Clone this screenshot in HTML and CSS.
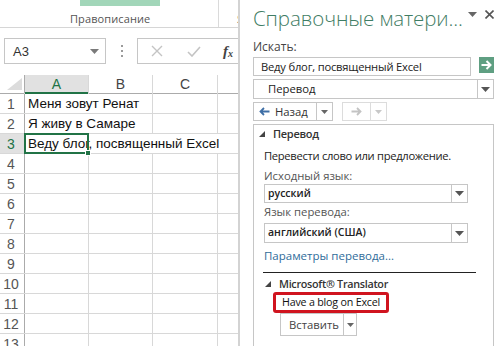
FILE: index.html
```html
<!DOCTYPE html>
<html lang="ru">
<head>
<meta charset="utf-8">
<link rel="stylesheet" href="styles.css">
</head>
<body>
<div class="app">
  <div class="excel">
    <div class="ribbon">
      <div class="group">
        <div class="green-block"></div>
        <div class="group-label">Правописание</div>
      </div>
      <div class="rsep"></div>
      <div class="next-label">Я</div>
    </div>
    <div class="fbar">
      <div class="namebox"><span>A3</span><svg class="nb-arrow" width="9" height="5" viewBox="0 0 9 5"><polygon points="0,0 9,0 4.5,5" fill="#7a7a7a"/></svg></div>
      <div class="vdots"><i></i><i></i><i></i></div>
      <div class="formula">
        <svg class="ficon" width="12" height="12" viewBox="0 0 12 12"><path d="M1 1 L11 11 M11 1 L1 11" stroke="#c4c4c4" stroke-width="1.4"/></svg>
        <svg class="ficon" width="14" height="11" viewBox="0 0 14 11"><path d="M1 6 L5 10 L13 1" stroke="#c4c4c4" stroke-width="1.6" fill="none"/></svg>
        <span class="fx">f<sub>x</sub></span>
      </div>
    </div>
    <div class="grid">
      <div class="corner"><svg width="15" height="12" viewBox="0 0 15 12"><polygon points="15,0 15,12 0,12" fill="#dcdcdc"/></svg></div>
      <div class="ch sel-col">A</div>
      <div class="ch">B</div>
      <div class="ch">C</div>
      <div class="ch"></div>

      <div class="rh">1</div>
      <div class="c span2">Меня зовут Ренат</div>
      <div class="c"></div>
      <div class="c"></div>

      <div class="rh">2</div>
      <div class="c span2">Я живу в Самаре</div>
      <div class="c"></div>
      <div class="c"></div>

      <div class="rh sel-row r3-head">3</div>
      <div class="c r3-text">Веду блог, посвященный Excel</div>
      <div class="selection"><span class="handle"></span></div>

      <div class="rh">4</div><div class="c"></div><div class="c"></div><div class="c"></div><div class="c"></div>
      <div class="rh">5</div><div class="c"></div><div class="c"></div><div class="c"></div><div class="c"></div>
      <div class="rh">6</div><div class="c"></div><div class="c"></div><div class="c"></div><div class="c"></div>
      <div class="rh">7</div><div class="c"></div><div class="c"></div><div class="c"></div><div class="c"></div>
      <div class="rh">8</div><div class="c"></div><div class="c"></div><div class="c"></div><div class="c"></div>
      <div class="rh">9</div><div class="c"></div><div class="c"></div><div class="c"></div><div class="c"></div>
      <div class="rh">10</div><div class="c"></div><div class="c"></div><div class="c"></div><div class="c"></div>
      <div class="rh">11</div><div class="c"></div><div class="c"></div><div class="c"></div><div class="c"></div>
      <div class="rh">12</div><div class="c"></div><div class="c"></div><div class="c"></div><div class="c"></div>
      <div class="rh">13</div><div class="c"></div><div class="c"></div><div class="c"></div><div class="c"></div>
    </div>
  </div>

  <div class="pane">
    <div class="title-row">
      <div class="title">Справочные матери...</div>
      <svg class="t-drop" width="9" height="5" viewBox="0 0 9 5"><polygon points="0,0 9,0 4.5,5" fill="#666"/></svg>
      <svg class="t-close" width="9" height="9" viewBox="0 0 9 9"><path d="M0.5 0.5 L8.5 8.5 M8.5 0.5 L0.5 8.5" stroke="#555" stroke-width="1.6"/></svg>
    </div>
    <div class="label">Искать:</div>
    <div class="search-row">
      <div class="search-input">Веду блог, посвященный Excel</div>
      <div class="go"><svg width="11" height="10" viewBox="0 0 11 10"><path d="M0.5 5 H9 M5.5 1 L9.5 5 L5.5 9" stroke="#fff" stroke-width="2" fill="none"/></svg></div>
    </div>
    <div class="select service">
      <span class="sel-text">Перевод</span>
      <span class="sel-btn"><svg width="9" height="5" viewBox="0 0 9 5"><polygon points="0,0 9,0 4.5,5" fill="#555"/></svg></span>
    </div>
    <div class="nav-row">
      <div class="navbtn">
        <span class="nav-main"><svg width="11" height="9" viewBox="0 0 11 9"><path d="M10.5 4.5 H2 M5 1 L1.5 4.5 L5 8" stroke="#3f6fa6" stroke-width="1.8" fill="none"/></svg>Назад</span>
        <span class="nav-drop"><svg width="7" height="4" viewBox="0 0 7 4"><polygon points="0,0 7,0 3.5,4" fill="#666"/></svg></span>
      </div>
      <div class="navbtn disabled">
        <span class="nav-main"><svg width="11" height="9" viewBox="0 0 11 9"><path d="M0.5 4.5 H9 M6 1 L9.5 4.5 L6 8" stroke="#c3c3c3" stroke-width="1.8" fill="none"/></svg></span>
        <span class="nav-drop"><svg width="7" height="4" viewBox="0 0 7 4"><polygon points="0,0 7,0 3.5,4" fill="#c8c8c8"/></svg></span>
      </div>
    </div>
    <div class="section">
      <div class="sec-head"><svg class="tri" width="6" height="6" viewBox="0 0 6 6"><polygon points="6,0 6,6 0,6" fill="#444"/></svg>Перевод</div>
      <div class="desc">Перевести слово или предложение.</div>
      <div class="flabel">Исходный язык:</div>
      <div class="select lang">
        <span class="sel-text">русский</span>
        <span class="sel-btn"><svg width="9" height="5" viewBox="0 0 9 5"><polygon points="0,0 9,0 4.5,5" fill="#555"/></svg></span>
      </div>
      <div class="flabel second">Язык перевода:</div>
      <div class="select lang lang2">
        <span class="sel-text">английский (США)</span>
        <span class="sel-btn"><svg width="9" height="5" viewBox="0 0 9 5"><polygon points="0,0 9,0 4.5,5" fill="#555"/></svg></span>
      </div>
      <div class="link">Параметры перевода...</div>
      <div class="rule"></div>
      <div class="sec-head sub"><svg class="tri" width="6" height="6" viewBox="0 0 6 6"><polygon points="6,0 6,6 0,6" fill="#444"/></svg>Microsoft® Translator</div>
      <div class="result">Have a blog on Excel</div>
      <div class="insert">
        <span class="ins-main">Вставить</span>
        <span class="ins-drop"><svg width="7" height="4" viewBox="0 0 7 4"><polygon points="0,0 7,0 3.5,4" fill="#666"/></svg></span>
      </div>
    </div>
  </div>
</div>
</body>
</html>
```

FILE: styles.css
```css
* { box-sizing: border-box; }
html, body { margin: 0; padding: 0; background: #fff; }
body { width: 501px; height: 346px; overflow: hidden; font-family: "Open Sans", "Noto Sans", sans-serif; color: #262626; }

.app { display: flex; width: 501px; height: 346px; }

/* ---------- Excel side ---------- */
.excel { width: 238px; flex: none; overflow: hidden; display: flex; flex-direction: column; background: #fff; }

.ribbon { height: 28px; flex: none; display: flex; border-bottom: 1px solid #d6d6d6; }
.group { width: 218px; flex: none; }
.green-block { width: 80px; height: 6px; margin-left: 80px; background: #a2d6b9; }
.group-label { margin-left: 70px; margin-top: 6px; font-size: 11px; line-height: 14px; color: #555; letter-spacing: 0.1px; white-space: nowrap; }
.rsep { width: 1px; height: 27px; background: #dadada; flex: none; }
.next-label { margin-left: 18px; margin-top: 12px; font-size: 11px; line-height: 14px; color: #555; white-space: nowrap; }

.fbar { display: flex; align-items: center; height: 26px; margin-top: 10px; flex: none; }
.namebox { width: 102px; height: 26px; margin-left: 4px; border: 1px solid #c6c6c6; display: flex; align-items: center; justify-content: space-between; padding: 0 6px 0 8px; font-family: "Liberation Sans", sans-serif; font-size: 13px; color: #333; flex: none; }
.vdots { width: 31px; display: flex; flex-direction: column; align-items: center; gap: 3px; flex: none; }
.vdots i { display: block; width: 2px; height: 2px; background: #9a9a9a; }
.formula { width: 110px; height: 26px; border: 1px solid #c6c6c6; border-right: none; display: flex; align-items: center; padding-left: 13px; flex: none; }
.formula .ficon:first-child { margin-right: 24px; }
.formula .ficon:nth-child(2) { margin-right: 22px; }
.fx { font-family: "Liberation Serif", serif; font-style: italic; font-size: 15px; color: #444; font-weight: bold; }
.fx sub { font-size: 10px; vertical-align: -1px; }

.grid { margin-top: 11px; display: grid; grid-template-columns: 24px 63px 63px 64px 30px; grid-template-rows: 18px repeat(13, 19px); gap: 1px; background: #d8d8d8; flex: none; }
.grid > div { background: #fff; }
.corner { display: flex; align-items: flex-end; justify-content: flex-end; padding: 0 2px 3px 0; box-shadow: 0 1px 0 #ababab, 1px 0 0 #ababab; }
.ch { display: flex; align-items: center; justify-content: center; font-family: "Liberation Sans", sans-serif; font-size: 14px; color: #444; box-shadow: 0 1px 0 #ababab; }
.ch.sel-col { background: #e1e1e1 !important; color: #217346; box-shadow: 0 1px 0 #217346, inset 0 -1px 0 #217346; }
.rh { display: flex; align-items: center; justify-content: center; font-family: "Liberation Sans", sans-serif; font-size: 14px; color: #555; box-shadow: 1px 0 0 #ababab; padding-right: 2px; }
.rh.sel-row { background: #e1e1e1 !important; color: #217346; box-shadow: 1px 0 0 #217346; }
.c { font-family: "Liberation Sans", sans-serif; font-size: 13.5px; color: #111; white-space: nowrap; padding-left: 3px; line-height: 19px; }
.span2 { grid-column: span 2; }
.r3-head { grid-row: 4; grid-column: 1; }
.r3-text { grid-row: 4; grid-column: 2 / span 4; }
.selection { grid-row: 4; grid-column: 2; margin: -1px; border: 2px solid #217346; background: transparent !important; position: relative; z-index: 2; }
.handle { position: absolute; right: -4px; bottom: -4px; width: 6px; height: 6px; background: #217346; border: 1px solid #fff; }

/* ---------- Pane ---------- */
.pane { flex: 1; border-left: 2px solid #d3d3d3; padding: 0 7px 0 13px; display: flex; flex-direction: column; overflow: hidden; }

.title-row { display: flex; align-items: center; height: 24px; margin-top: 6px; flex: none; }
.title { flex: 1; font-weight: 300; font-size: 20.5px; color: #3f7d64; white-space: nowrap; letter-spacing: -0.1px; }
.t-drop { margin-left: 4px; margin-top: -8px; }
.t-close { margin-left: 8px; margin-top: -8px; }

.label { font-size: 12px; color: #444; line-height: 16px; margin-top: 9px; flex: none; }
.search-row { display: flex; align-items: flex-start; margin-top: 2px; flex: none; }
.search-input { width: 218px; height: 19px; border: 1px solid #c6c6c6; font-size: 11.2px; letter-spacing: -0.2px; line-height: 17px; padding-left: 7px; color: #222; white-space: nowrap; overflow: hidden; }
.go { width: 15px; height: 16px; margin-left: 8px; background: #5f9f82; display: flex; align-items: center; justify-content: center; }

.select { display: flex; height: 20px; border: 1px solid #c6c6c6; flex: none; }
.select .sel-text { flex: 1; font-size: 11.3px; line-height: 18px; white-space: nowrap; color: #222; }
.select .sel-btn { width: 16px; border-left: 1px solid #c6c6c6; display: flex; align-items: center; justify-content: center; }
.service { margin-top: 3px; }
.service .sel-text { padding-left: 14px; }

.nav-row { display: flex; gap: 9px; margin-top: 3px; flex: none; }
.navbtn { display: flex; height: 19px; border: 1px solid #c6c6c6; }
.nav-main { display: flex; align-items: center; gap: 5px; padding: 0 5px 0 5px; font-size: 11.3px; color: #333; border-right: 1px solid #c6c6c6; }
.navbtn:first-child .nav-main { width: 63px; }
.nav-drop { width: 15px; display: flex; align-items: center; justify-content: center; }
.navbtn.disabled { border-color: #dcdcdc; }
.navbtn.disabled .nav-main { width: 28px; justify-content: center; border-right-color: #dcdcdc; }

.section { flex: 1; margin-top: 3px; border: 1px solid #c6c6c6; border-bottom: none; padding: 0 25px 0 10px; }
.sec-head { display: flex; align-items: center; height: 17px; font-weight: 600; font-size: 11px; letter-spacing: -0.3px; color: #333; margin-left: -5px; }
.sec-head .tri { margin-right: 8px; margin-top: 1px; }
.desc { font-size: 11.2px; letter-spacing: -0.3px; line-height: 16px; color: #222; margin-top: 6px; white-space: nowrap; }
.flabel { font-size: 11.3px; line-height: 16px; color: #555; margin-top: 4px; }
.flabel.second { margin-top: 1px; }
.select.lang { height: 19px; }
.select.lang .sel-text { padding-left: 3px; font-weight: 600; font-size: 10.5px; line-height: 17px; }
.select.lang2 { margin-top: 3px; height: 20px; }
.link { font-size: 11.5px; line-height: 16px; color: #2f6c9a; margin-top: 5px; }
.rule { height: 1px; background: #222; width: 213px; margin: 8px 0 0 -1px; }
.sec-head.sub { margin-left: 1px; margin-top: 2px; font-size: 10.8px; }
.result { margin-left: 9px; margin-top: 0; height: 21px; width: 116px; border: 3px solid #d0141f; border-radius: 3px; font-size: 10.7px; letter-spacing: -0.2px; line-height: 15px; padding-left: 6px; color: #111; white-space: nowrap; }
.insert { display: flex; width: 77px; height: 23px; margin-left: 16px; margin-top: 0; border: 1px solid #c6c6c6; }
.ins-main { width: 63px; border-right: 1px solid #c6c6c6; font-size: 11.3px; line-height: 21px; padding-left: 8px; color: #444; }
.ins-drop { flex: 1; display: flex; align-items: center; justify-content: center; }
```
